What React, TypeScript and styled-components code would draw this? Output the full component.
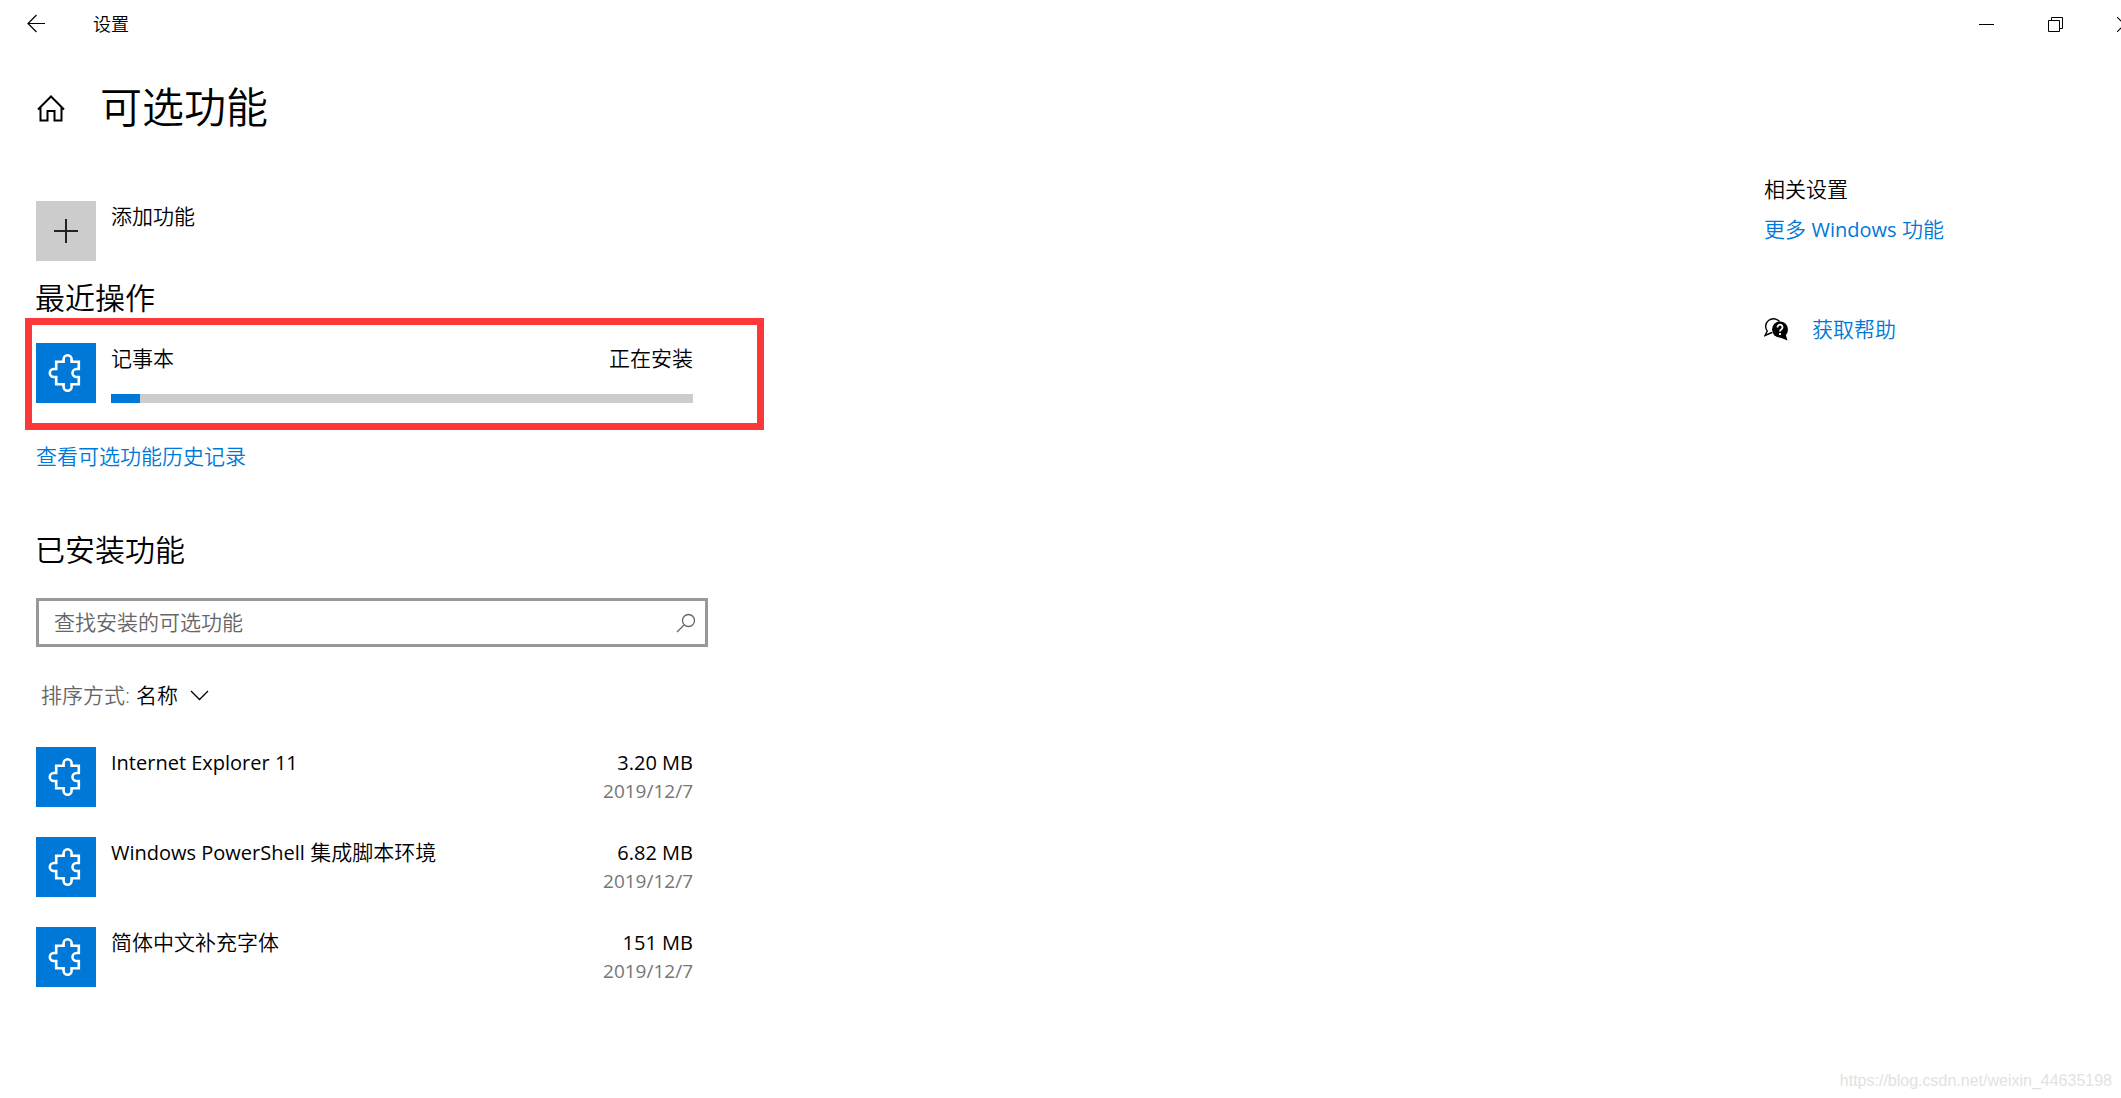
import React from "react";
import styled, { createGlobalStyle } from "styled-components";

const GlobalStyle = createGlobalStyle`
  *, *::before, *::after { box-sizing: border-box; }
  body {
    margin: 0;
    background: #fff;
    color: #000;
    font-family: "Open Sans", "Noto Sans CJK SC", sans-serif;
    font-size: 21px;
    font-weight: 350;
    line-height: 28px;
  }
  h1, h2, h3, p, ul { margin: 0; padding: 0; font-weight: inherit; }
  button, input, select { font: inherit; color: inherit; }
`;

const Window = styled.div`
  display: flex;
  flex-direction: column;
  min-height: 100vh;
  overflow: hidden;
`;

const TitleBar = styled.header`
  display: flex;
  align-items: center;
  height: 48px;
  margin-right: -38px;
`;

const BarButton = styled.button`
  display: grid;
  place-items: center;
  width: 69px;
  height: 48px;
  padding: 0;
  border: 0;
  background: transparent;
`;

const BackButton = styled(BarButton)`
  padding-left: 2px;
`;

const WindowTitle = styled.span`
  flex: 1;
  padding-left: 24px;
  font-size: 18px;
`;

const Heading = styled.div`
  display: flex;
  align-items: center;
  gap: 34px;
  height: 120px;
  padding-left: 36px;
`;

const HomeButton = styled.button`
  display: flex;
  padding: 0;
  border: 0;
  background: transparent;
`;

const PageTitle = styled.h1`
  padding-bottom: 2px;
  font-size: 42px;
  line-height: 56px;
`;

const Columns = styled.div`
  display: grid;
  flex: 1;
  grid-template-columns: minmax(0, 1fr) 357px;
`;

const Main = styled.main`
  width: 100%;
  max-width: 764px;
  padding: 33px 0 40px 36px;
`;

const AddButton = styled.button`
  display: flex;
  gap: 15px;
  padding: 0;
  border: 0;
  background: transparent;
`;

const AddLabel = styled.span`
  padding-top: 1px;
`;

const Tile = styled.span<{ $muted?: boolean }>`
  display: grid;
  flex: none;
  place-items: center;
  width: 60px;
  height: 60px;
  background: ${(p) => (p.$muted ? "#ccc" : "#0078d7")};
`;

const SectionTitle = styled.h2`
  margin-left: -1px;
  font-size: 30px;
  line-height: 40px;
`;

const RecentTitle = styled(SectionTitle)`
  margin-top: 17px;
`;

const InstalledTitle = styled(SectionTitle)`
  margin-top: 60px;
`;

const Highlight = styled.section`
  display: flex;
  gap: 15px;
  margin: 0 0 12px -11px;
  padding: 18px 64px 20px 4px;
  border: 7px solid #fd3838;
`;

const Job = styled.div`
  display: flex;
  flex: 1;
  flex-direction: column;
  justify-content: space-between;
  padding-top: 1px;
`;

const Line = styled.div`
  display: flex;
  justify-content: space-between;
`;

const Progress = styled.progress`
  display: block;
  width: 100%;
  height: 9px;
  border: 0;
  appearance: none;
  background: #ccc;
  &::-webkit-progress-bar { background: #ccc; }
  &::-webkit-progress-value { background: #0078d7; }
`;

const Link = styled.a`
  color: #0078d7;
  text-decoration: none;
`;

const SearchBox = styled.label`
  display: flex;
  align-items: center;
  max-width: 672px;
  height: 49px;
  margin-top: 28px;
  padding: 0 9px 0 15px;
  border: 3px solid #999;
`;

const SearchInput = styled.input`
  flex: 1;
  min-width: 0;
  padding: 0 0 2px;
  border: 0;
  outline: 0;
  background: transparent;
  &::placeholder { color: #666; opacity: 1; }
`;

const SortRow = styled.label`
  display: inline-flex;
  align-items: center;
  margin: 34px 0 0 5px;
  color: #666;
`;

const SortSelect = styled.select`
  margin-left: 6px;
  padding: 0;
  border: 0;
  appearance: none;
  background: transparent;
  color: #000;
`;

const FeatureList = styled.ul`
  display: grid;
  gap: 30px;
  max-width: 657px;
  margin-top: 38px;
  list-style: none;
`;

const Feature = styled.li`
  display: flex;
  gap: 15px;
`;

const FeatureName = styled.span`
  flex: 1;
  padding-top: 1px;
`;

const Latin = styled.span`
  font-size: 20px;
  font-weight: 400;
`;

const Meta = styled.div`
  padding-top: 2px;
  font-size: 20px;
  font-weight: 400;
  text-align: right;
`;

const DateText = styled.div`
  color: #767676;
  font-size: 19px;
`;

const Related = styled.aside`
  display: flex;
  flex-direction: column;
  align-items: flex-start;
  padding-top: 7px;
`;

const RelatedTitle = styled.h3`
  margin-bottom: 12px;
  font-size: 21px;
`;

const Help = styled.div`
  display: flex;
  align-items: center;
  gap: 24px;
  margin-top: 71px;
`;

const Watermark = styled.footer`
  position: absolute;
  right: 9px;
  bottom: 7px;
  color: #e2e2e2;
  font: 16px/20px "Liberation Sans", sans-serif;
`;

const Puzzle = () => (
  <svg width="60" height="60" viewBox="0 0 60 60" fill="none" stroke="#fff" strokeWidth="2.6">
    <path d="M20.200 18.800H27.600V16.200A4 4 0 0 1 35.600 16.200V18.800H42.800V26H40.500A4 4 0 0 0 40.500 34H42.800V41.300H35.600V43.800A4 4 0 0 1 27.600 43.800V41.300H20.200V34H17.800A4 4 0 0 1 17.800 26H20.200Z" />
  </svg>
);

const features = [
  { latin: "Internet Explorer 11", name: "", size: "3.20 MB", date: "2019/12/7" },
  { latin: "Windows PowerShell", name: " 集成脚本环境", size: "6.82 MB", date: "2019/12/7" },
  { latin: "", name: "简体中文补充字体", size: "151 MB", date: "2019/12/7" },
];

export default function App() {
  return (
    <Window>
      <GlobalStyle />
      <TitleBar>
        <BackButton aria-label="返回">
          <svg width="20" height="20" viewBox="0 0 20 20" fill="none" stroke="#000" strokeWidth="1.2">
            <path d="M19 9.500H2M10.500 1L2 9.500L10.500 18" />
          </svg>
        </BackButton>
        <WindowTitle>设置</WindowTitle>
        <BarButton aria-label="最小化">
          <svg width="15" height="15" viewBox="0 0 15 15" stroke="#000">
            <path d="M0 7.500H15" />
          </svg>
        </BarButton>
        <BarButton aria-label="还原">
          <svg width="15" height="15" viewBox="0 0 15 15" fill="none" stroke="#000">
            <path d="M.5 3.500H11.500V14.500H.5ZM3.500 3.500V.5H14.500V11.500H11.500" />
          </svg>
        </BarButton>
        <BarButton aria-label="关闭">
          <svg width="15" height="15" viewBox="0 0 15 15" stroke="#000" strokeWidth="1.1">
            <path d="M0 0L15 15M15 0L0 15" />
          </svg>
        </BarButton>
      </TitleBar>

      <Heading>
        <HomeButton aria-label="主页">
          <svg width="30" height="28" viewBox="0 0 30 28" fill="none" stroke="#000" strokeWidth="2">
            <path d="M2 15.500L15 2.500L28 15.500M4.500 13.500V26.500H11.500V17H18.500V26.500H25.500V13.500" />
          </svg>
        </HomeButton>
        <PageTitle>可选功能</PageTitle>
      </Heading>

      <Columns>
        <Main>
          <AddButton>
            <Tile $muted>
              <svg width="24" height="24" viewBox="0 0 24 24" stroke="#222" strokeWidth="2">
                <path d="M12 0V24M0 12H24" />
              </svg>
            </Tile>
            <AddLabel>添加功能</AddLabel>
          </AddButton>

          <RecentTitle>最近操作</RecentTitle>
          <Highlight>
            <Tile><Puzzle /></Tile>
            <Job>
              <Line>
                <span>记事本</span>
                <span>正在安装</span>
              </Line>
              <Progress value={5} max={100} aria-label="记事本" />
            </Job>
          </Highlight>
          <Link href="#history">查看可选功能历史记录</Link>

          <InstalledTitle>已安装功能</InstalledTitle>
          <SearchBox>
            <SearchInput type="text" placeholder="查找安装的可选功能" aria-label="查找安装的可选功能" />
            <svg width="20" height="20" viewBox="0 0 20 20" fill="none" stroke="#666" strokeWidth="1.300">
              <circle cx="12.500" cy="7.500" r="6" />
              <path d="M8 12L1 19" />
            </svg>
          </SearchBox>
          <SortRow>
            排序方式:
            <SortSelect defaultValue="name">
              <option value="name">名称</option>
            </SortSelect>
            <svg width="31" height="12" viewBox="0 0 31 12" fill="none" stroke="#000" strokeWidth="1.300">
              <path d="M13 2L21.500 10.500L30 2" />
            </svg>
          </SortRow>

          <FeatureList>
            {features.map((f) => (
              <Feature key={f.latin + f.name}>
                <Tile><Puzzle /></Tile>
                <FeatureName>
                  {f.latin && <Latin>{f.latin}</Latin>}
                  {f.name}
                </FeatureName>
                <Meta>
                  <div>{f.size}</div>
                  <DateText>{f.date}</DateText>
                </Meta>
              </Feature>
            ))}
          </FeatureList>
        </Main>

        <Related>
          <RelatedTitle>相关设置</RelatedTitle>
          <Link href="#more">更多 <Latin>Windows</Latin> 功能</Link>
          <Help>
            <svg width="24" height="24" viewBox="0 0 24 24">
              <path d="M3.500 14.500A7.500 7.500 0 1 1 15.500 4.500M3.500 13.500L1 18.500L8 15.500" fill="none" stroke="#000" strokeWidth="1.400" />
              <circle cx="16" cy="12.500" r="8" />
              <path d="M15 20L23.500 23.500L21.500 17Z" />
              <path d="M13.500 10.500A2.500 2.500 0 1 1 17.500 12.200Q16 13 16 14.500M16 16V18" fill="none" stroke="#fff" strokeWidth="1.800" />
            </svg>
            <Link href="#help">获取帮助</Link>
          </Help>
        </Related>
      </Columns>
      <Watermark>https://blog.csdn.net/weixin_44635198</Watermark>
    </Window>
  );
}
